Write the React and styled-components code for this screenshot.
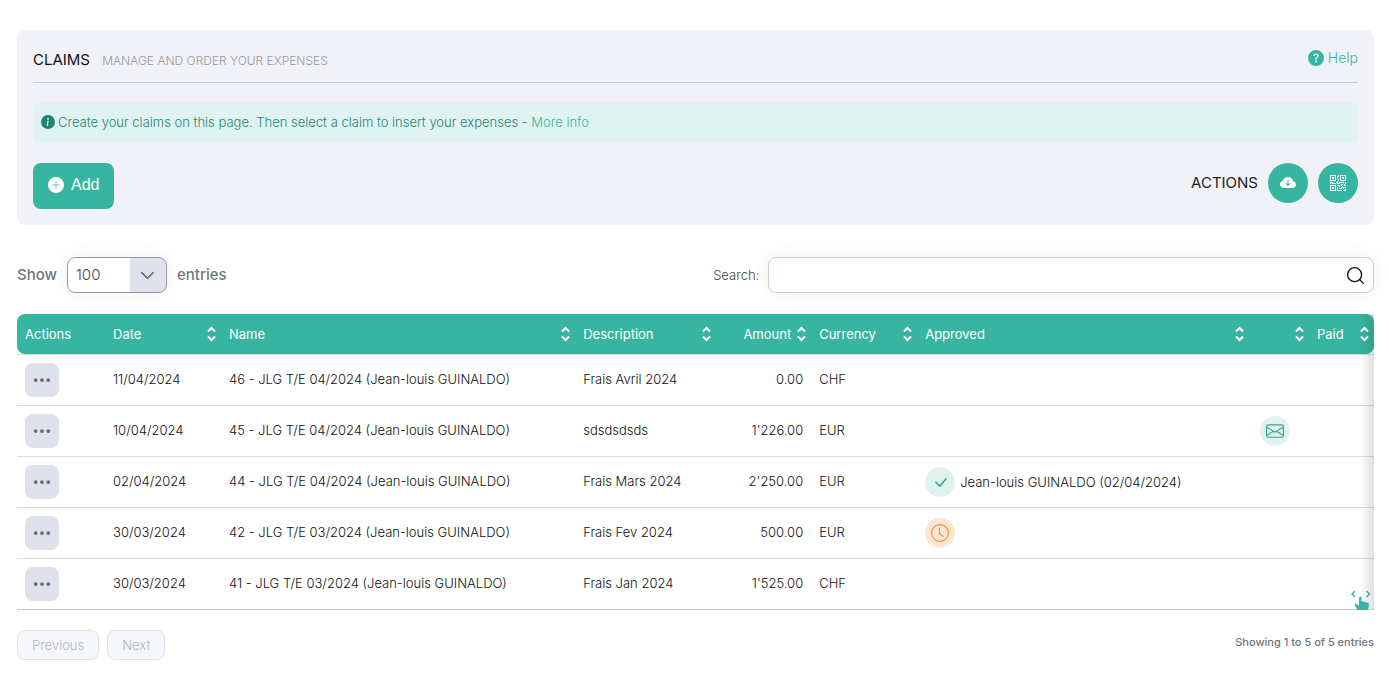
import { useState } from "react";
import styled, { createGlobalStyle, css } from "styled-components";
import { Search } from "lucide-react";
import {
  BsCheckLg,
  BsChevronDown,
  BsClock,
  BsCloudArrowDownFill,
  BsEnvelope,
  BsInfoCircleFill,
  BsQrCode,
  BsQuestionCircleFill,
  BsThreeDots,
} from "react-icons/bs";

const GlobalStyle = createGlobalStyle`
  * {
    box-sizing: border-box;
  }

  body {
    margin: 0;
    background: #fff;
    color: #111;
    font-family: Inter, "Liberation Sans", sans-serif;
    font-size: 13px;
    font-weight: 300;
    line-height: 20px;
  }

  button, input, select {
    font: inherit;
    color: inherit;
  }
`;

const Page = styled.main`
  padding: 30px 15px 40px 17px;
`;

const Panel = styled.section`
  padding: 16px;
  border-radius: 8px;
  background: #f1f2f8;
`;

const PanelHeader = styled.header`
  display: flex;
  align-items: center;
  justify-content: space-between;
  height: 37px;
  padding-bottom: 12px;
  border-bottom: 1px solid #cbcbde;
`;

const Title = styled.h1`
  margin: 4px 0 0;
  font-size: 15px;
  font-weight: 400;

  small {
    margin-left: 8px;
    color: #999;
    font-size: 12px;
    font-weight: 300;
  }
`;

const HelpLink = styled.a`
  display: flex;
  align-items: center;
  gap: 4px;
  color: #37b5a0;
  font-size: 14px;
  text-decoration: none;
`;

const Notice = styled.p`
  display: flex;
  align-items: center;
  gap: 3px;
  height: 40px;
  margin: 20px 0;
  padding: 0 8px 2px;
  border-radius: 4px;
  background: #e1f3f0;
  color: #1f8575;

  a {
    color: #37b5a0;
    text-decoration: none;
  }
`;

const Toolbar = styled.div`
  display: flex;
  align-items: flex-start;
  justify-content: space-between;
`;

const AddButton = styled.button`
  display: flex;
  align-items: center;
  gap: 7px;
  height: 46px;
  padding: 0 15px 2px;
  border: 0;
  border-radius: 8px;
  background: #37b5a0;
  color: #fff;
  font-family: "Liberation Sans", Arial, sans-serif;
  font-size: 16px;
  font-weight: 400;
  cursor: pointer;
`;

const ActionGroup = styled.div`
  display: flex;
  align-items: center;
  gap: 10px;
  color: #222;
  font-size: 15px;
  font-weight: 400;
`;

const RoundButton = styled.button`
  display: grid;
  place-items: center;
  width: 40px;
  height: 40px;
  padding: 0;
  border: 0;
  border-radius: 50%;
  background: #37b5a0;
  color: #fff;
  cursor: pointer;
`;

const Filters = styled.div`
  display: flex;
  align-items: center;
  justify-content: space-between;
  margin: 32px 0 21px;
`;

const LengthLabel = styled.label`
  display: flex;
  align-items: center;
  gap: 10px;
  color: #717780;
  font-size: 15px;
  font-weight: 500;
`;

const SelectBox = styled.span`
  position: relative;
  display: flex;
  width: 100px;
  height: 36px;
  border: 1px solid #999;
  border-radius: 8px;
  overflow: hidden;
  background: linear-gradient(to right, #fff 62px, #dfe1ed 62px);
  box-shadow: 0 0 20px rgba(0, 0, 0, 0.06);

  svg {
    position: absolute;
    top: 10px;
    right: 11px;
    color: #666b77;
    stroke-width: 1;
    pointer-events: none;
  }
`;

const Select = styled.select`
  width: 100%;
  padding: 0 8px;
  border: 0;
  outline: 0;
  appearance: none;
  background: transparent;
  color: #444;
  font-size: 15px;
  font-weight: 300;
`;

const SearchLabel = styled.label`
  display: flex;
  align-items: center;
  gap: 9px;
  width: 48.7%;
  color: #444;
`;

const SearchBox = styled.span`
  display: flex;
  flex: 1;
  align-items: center;
  height: 36px;
  padding-right: 7px;
  border: 1px solid #cbcbde;
  border-radius: 8px;
  background: #fff;
  box-shadow: 0 0 20px rgba(0, 0, 0, 0.06);
  color: #111;
`;

const SearchInput = styled.input`
  flex: 1;
  min-width: 0;
  height: 100%;
  padding: 0 10px;
  border: 0;
  outline: 0;
  background: transparent;
`;

const TableWrap = styled.div`
  position: relative;
`;

const ScrollShadow = styled.div`
  position: absolute;
  inset: 0 0 1px auto;
  width: 14px;
  background: linear-gradient(to right, transparent, rgba(0, 0, 0, 0.12));
  pointer-events: none;
`;

const ScrollHint = styled.svg`
  position: absolute;
  right: 3px;
  bottom: 0;
  color: #37b5a0;
`;

const Table = styled.table`
  width: 100%;
  table-layout: fixed;
  border-collapse: separate;
  border-spacing: 0;
  border-bottom: 1px solid #c5c5c5;
`;

const Col = styled.col`
  width: ${({ $width }) => $width};
`;

const HeadCell = styled.th`
  height: 40px;
  padding: 0 5px 0 8px;
  background: #37b5a0;
  color: #fff;
  font-weight: 400;
  text-align: left;

  &:first-child {
    border-radius: 8px 0 0 8px;
  }

  &:last-child {
    border-radius: 0 8px 8px 0;
  }
`;

const SortButton = styled.button`
  display: flex;
  align-items: center;
  gap: 6px;
  width: 100%;
  padding: 0;
  border: 0;
  background: none;
  cursor: pointer;

  span {
    flex: 1;
    text-align: ${({ $align }) => $align || "left"};
  }
`;

const Cell = styled.td`
  height: 51px;
  padding: 0 8px;
  border-top: 1px solid #dcdcdc;
  white-space: nowrap;
  text-align: ${({ $align }) => $align || "left"};

  ${({ $align }) =>
    $align === "center" &&
    css`
      padding-right: 16px;
    `}
`;

const TextCell = styled(Cell)`
  padding-bottom: 2px;
`;

const MoreButton = styled.button`
  display: grid;
  place-items: center;
  width: 34px;
  height: 34px;
  padding: 0;
  border: 0;
  border-radius: 8px;
  background: #dfe1ed;
  color: #666b77;
  cursor: pointer;
`;

const Approval = styled.div`
  display: flex;
  align-items: center;
  gap: 5px;
`;

const Badge = styled.span`
  display: inline-grid;
  place-items: center;
  width: 30px;
  height: 30px;
  border-radius: 50%;
  background: ${({ $pending }) => ($pending ? "#ffe5d3" : "#e1f3f0")};
  color: ${({ $pending }) => ($pending ? "#f58a42" : "#37a592")};
  vertical-align: middle;
`;

const Footer = styled.footer`
  display: flex;
  justify-content: space-between;
  margin-top: 20px;
`;

const Pager = styled.nav`
  display: flex;
  gap: 8px;
`;

const PageButton = styled.button`
  height: 30px;
  padding: 0 14px;
  border: 1px solid #dfe1ed;
  border-radius: 8px;
  background: #f6f7fb;
  color: #b3b5ba;
`;

const Info = styled.div`
  padding-top: 2px;
  color: #717780;
  font-size: 11px;
  font-weight: 500;
`;

const columns = [
  { label: "Actions", width: "88px" },
  { label: "Date", width: "116px", sortable: true },
  { label: "Name", width: "26.1%", sortable: true },
  { label: "Description", width: "141px", sortable: true },
  { label: "Amount", width: "95px", sortable: true, align: "right" },
  { label: "Currency", width: "106px", sortable: true },
  { label: "Approved", width: "auto", sortable: true },
  { label: "", width: "60px", sortable: true },
  { label: "Paid", width: "65px", sortable: true },
];

const claims = [
  { id: 46, date: "11/04/2024", name: "46 - JLG T/E 04/2024 (Jean-louis GUINALDO)", description: "Frais Avril 2024", amount: "0.00", currency: "CHF" },
  { id: 45, date: "10/04/2024", name: "45 - JLG T/E 04/2024 (Jean-louis GUINALDO)", description: "sdsdsdsds", amount: "1'226.00", currency: "EUR", mail: true },
  { id: 44, date: "02/04/2024", name: "44 - JLG T/E 04/2024 (Jean-louis GUINALDO)", description: "Frais Mars 2024", amount: "2'250.00", currency: "EUR", approvedBy: "Jean-louis GUINALDO (02/04/2024)" },
  { id: 42, date: "30/03/2024", name: "42 - JLG T/E 03/2024 (Jean-louis GUINALDO)", description: "Frais Fev 2024", amount: "500.00", currency: "EUR", pending: true },
  { id: 41, date: "30/03/2024", name: "41 - JLG T/E 03/2024 (Jean-louis GUINALDO)", description: "Frais Jan 2024", amount: "1'525.00", currency: "CHF" },
];

const SortIcon = () => (
  <svg width="9" height="16" viewBox="0 0 9 16" fill="none" stroke="currentColor" strokeWidth="2" aria-hidden="true">
    <path d="M1 5.5 4.5 2 8 5.5M1 10.5 4.5 14 8 10.5" />
  </svg>
);

const PlusIcon = () => (
  <svg width="16" height="16" viewBox="0 0 16 16" aria-hidden="true">
    <circle cx="8" cy="8" r="8" fill="currentColor" />
    <path d="M8 4v8M4 8h8" stroke="#37b5a0" strokeWidth="0.7" />
  </svg>
);

const ClaimRow = ({ claim }) => (
  <tr>
    <Cell>
      <MoreButton aria-label={`Actions for claim ${claim.id}`}>
        <BsThreeDots size={20} />
      </MoreButton>
    </Cell>
    <TextCell>{claim.date}</TextCell>
    <TextCell>{claim.name}</TextCell>
    <TextCell>{claim.description}</TextCell>
    <TextCell $align="right">{claim.amount}</TextCell>
    <TextCell>{claim.currency}</TextCell>
    <Cell>
      {claim.approvedBy && (
        <Approval>
          <Badge>
            <BsCheckLg size={17} />
          </Badge>
          {claim.approvedBy}
        </Approval>
      )}
      {claim.pending && (
        <Approval>
          <Badge $pending>
            <BsClock size={18} />
          </Badge>
        </Approval>
      )}
    </Cell>
    <Cell $align="center">
      {claim.mail && (
        <Badge>
          <BsEnvelope size={18} />
        </Badge>
      )}
    </Cell>
    <Cell />
  </tr>
);

const App = () => {
  const [length, setLength] = useState("100");
  const [search, setSearch] = useState("");

  return (
    <>
      <GlobalStyle />
      <Page>
        <Panel>
          <PanelHeader>
            <Title>
              CLAIMS <small>MANAGE AND ORDER YOUR EXPENSES</small>
            </Title>
            <HelpLink href="#help">
              <BsQuestionCircleFill size={16} />
              Help
            </HelpLink>
          </PanelHeader>
          <Notice>
            <BsInfoCircleFill size={14} />
            <span>
              Create your claims on this page. Then select a claim to insert your expenses - <a href="#info">More info</a>
            </span>
          </Notice>
          <Toolbar>
            <AddButton>
              <PlusIcon />
              Add
            </AddButton>
            <ActionGroup>
              ACTIONS
              <RoundButton aria-label="Download">
                <BsCloudArrowDownFill size={16} />
              </RoundButton>
              <RoundButton aria-label="QR code">
                <BsQrCode size={16} />
              </RoundButton>
            </ActionGroup>
          </Toolbar>
        </Panel>

        <Filters>
          <LengthLabel>
            Show
            <SelectBox>
              <Select value={length} onChange={(e) => setLength(e.target.value)}>
                <option>25</option>
                <option>50</option>
                <option>100</option>
              </Select>
              <BsChevronDown size={15} />
            </SelectBox>
            entries
          </LengthLabel>
          <SearchLabel>
            Search:
            <SearchBox>
              <SearchInput value={search} onChange={(e) => setSearch(e.target.value)} />
              <Search size={21} strokeWidth={1.5} />
            </SearchBox>
          </SearchLabel>
        </Filters>

        <TableWrap>
          <Table>
            <colgroup>
              {columns.map((col, i) => (
                <Col key={i} $width={col.width} />
              ))}
            </colgroup>
            <thead>
              <tr>
                {columns.map((col, i) => (
                  <HeadCell key={i}>
                    {col.sortable ? (
                      <SortButton $align={col.align}>
                        <span>{col.label}</span>
                        <SortIcon />
                      </SortButton>
                    ) : (
                      col.label
                    )}
                  </HeadCell>
                ))}
              </tr>
            </thead>
            <tbody>
              {claims.map((claim) => (
                <ClaimRow key={claim.id} claim={claim} />
              ))}
            </tbody>
          </Table>
          <ScrollShadow />
          <ScrollHint width="20" height="20" viewBox="0 0 20 20" aria-hidden="true">
            <path d="M4 1 1 4 4 7M15.500 1l3 3-3 3" fill="none" stroke="currentColor" strokeWidth="1.500" />
            <path
              d="M8 8q0-1.500 1.250-1.500T10.500 8v3.500q1.800-.8 2.400.5 1.700-.7 2.300.7 2.600-.5 2.600 1.300V17l-1 3H6.500L4 15.500q-.8-1.800.5-2 1.400 0 2 1.500L8 16Z"
              fill="currentColor"
            />
          </ScrollHint>
        </TableWrap>

        <Footer>
          <Pager aria-label="Pagination">
            <PageButton disabled>Previous</PageButton>
            <PageButton disabled>Next</PageButton>
          </Pager>
          <Info>Showing 1 to 5 of 5 entries</Info>
        </Footer>
      </Page>
    </>
  );
};

export default App;
